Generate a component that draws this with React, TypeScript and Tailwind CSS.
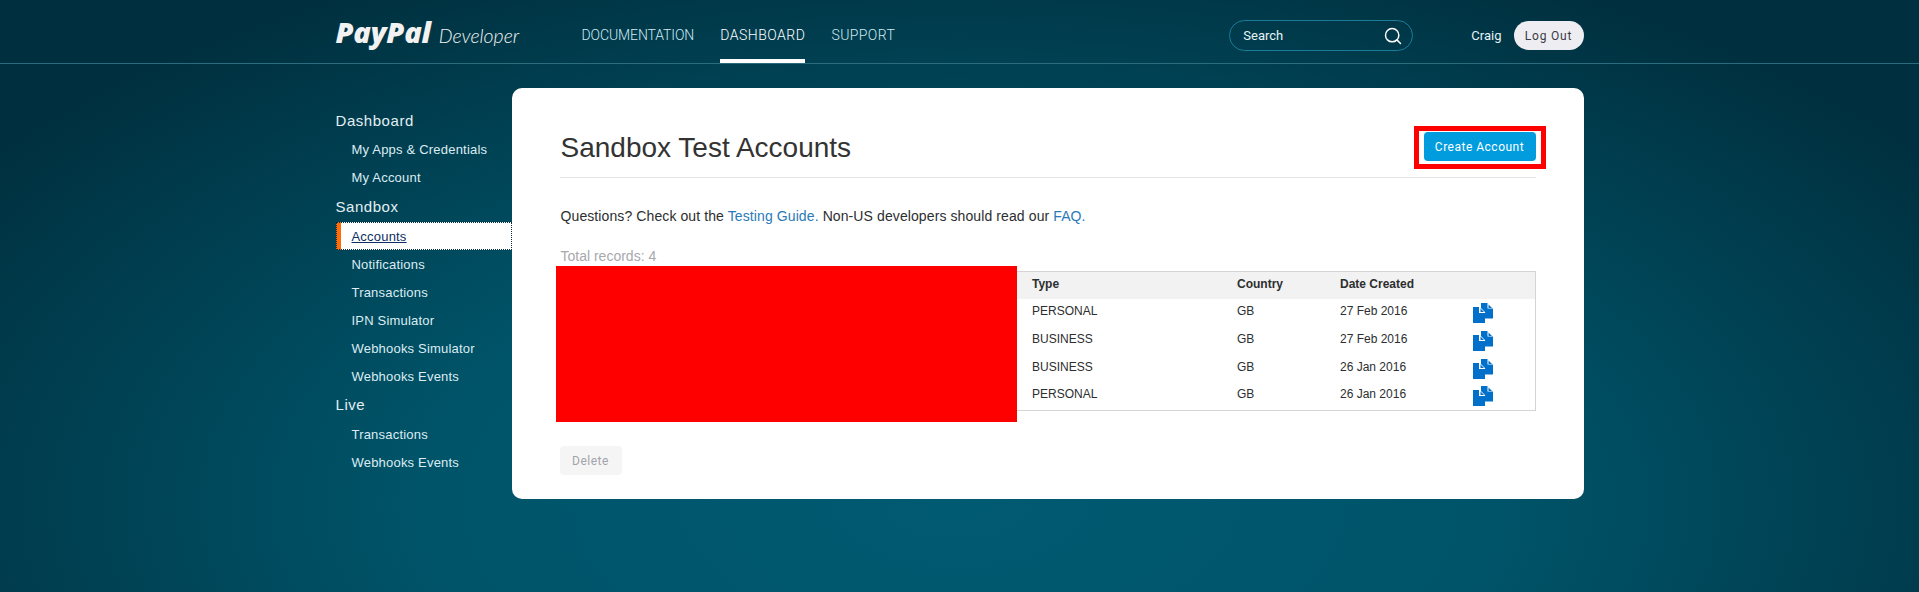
import React from 'react';
import { Search } from 'lucide-react';

const rows = [
  { type: 'PERSONAL', country: 'GB', date: '27 Feb 2016' },
  { type: 'BUSINESS', country: 'GB', date: '27 Feb 2016' },
  { type: 'BUSINESS', country: 'GB', date: '26 Jan 2016' },
  { type: 'PERSONAL', country: 'GB', date: '26 Jan 2016' },
];

const sideNav = [
  { title: 'Dashboard', items: ['My Apps & Credentials', 'My Account'] },
  { title: 'Sandbox', items: ['Accounts', 'Notifications', 'Transactions', 'IPN Simulator', 'Webhooks Simulator', 'Webhooks Events'] },
  { title: 'Live', items: ['Transactions', 'Webhooks Events'] },
];

const CopyIcon = () => (
  <svg width="20" height="20" viewBox="0 0 20 20" className="block">
    {/* back page */}
    <path d="M8 0h6.500v5.500H20V15.500H8z" fill="#0070ca" />
    <path d="M15.500 1.500 19 5H15.500z" fill="#0070ca" />
    {/* front page */}
    <path d="M6.500 3.500 12.500 9.500H12V10H6V3.500z" fill="#ffffff" />
    <path d="M7.500 5.500 11 9H7.500z" fill="#0070ca" />
    <path d="M0 4h6v6h6v10H0z" fill="#0070ca" />
  </svg>
);

export default function App() {
  return (
    <div className="relative h-[592px] w-full overflow-hidden bg-[radial-gradient(ellipse_62%_100%_at_50%_85%,#005a72_0%,#005469_45%,#00303f_100%)] font-['Liberation_Sans',sans-serif]">
      {/* Top bar */}
      <header className="h-16 border-b border-[#2b6c7e]">
        <div className="mx-auto flex h-[63px] w-[1248px] items-center pt-[8px]">
          <div className="flex w-[246px] items-baseline pb-[8px] text-[#f2f2f2]">
            <span className="font-['Open_Sans',sans-serif] text-[29px] font-extrabold italic leading-none tracking-[-0.2px]">PayPal</span>
            <span className="ml-2 font-['Lato',sans-serif] text-[19.5px] font-light italic leading-none">Developer</span>
          </div>
          <nav className="-mt-2 flex h-[63px] gap-[26px] font-['Roboto',sans-serif] text-[14px] font-light">
            <a className="flex h-full items-center pt-[7px] tracking-[-0.1px] text-[#cfeaf3]">DOCUMENTATION</a>
            <a className="flex h-full items-center border-b-4 border-white pt-[11px] tracking-[0.5px] text-white">DASHBOARD</a>
            <a className="flex h-full items-center pt-[7px] tracking-[0.4px] text-[#cfeaf3]">SUPPORT</a>
          </nav>
          <div className="ml-auto flex items-center">
            <div className="flex h-[31px] w-[184px] items-center justify-between rounded-full border border-[#1b7b99] pl-[13px] pr-[9px] font-['Roboto',sans-serif] text-[13px] text-[#e6f3f7]">
              <span>Search</span>
              <Search size={20} strokeWidth={1.75} className="text-white" />
            </div>
            <span className="ml-[58px] font-['Roboto',sans-serif] text-[13px] text-[#e6f3f7]">Craig</span>
            <button className="ml-[12px] h-[29px] w-[70px] rounded-full bg-[#eeeef2] font-['Roboto',sans-serif] text-[12px] tracking-[0.8px] text-[#3a3a45]">Log Out</button>
          </div>
        </div>
      </header>

      <div className="mx-auto mt-6 flex w-[1248px] items-start">
        {/* Side nav */}
        <aside className="w-[176px] pt-[18px] text-[#dcecf2]">
          {sideNav.map((group, g) => (
            <div key={group.title}>
              <div className="h-[30px] text-[15px] leading-[29px] tracking-[0.55px] text-[#e2eff3]">{group.title}</div>
              {group.items.map((item) =>
                item === 'Accounts' ? (
                  <div key={item} className="flex h-[28px] items-center border-l-[5px] border-[#ff6c0c] pt-[2px] outline-1 -outline-offset-1 outline-dotted outline-[#00303f] bg-white pl-[11px] text-[13px] tracking-[0.2px] text-[#0c2d62] underline">
                    {item}
                  </div>
                ) : (
                  <div key={group.title + item} className={g === 0 ? 'h-[28px] pl-4 text-[13px] leading-[28px] tracking-[0.2px]' : 'h-[28px] pl-4 text-[13px] leading-[30px] tracking-[0.2px]'}>{item}</div>
                ),
              )}
            </div>
          ))}
        </aside>

        {/* Card */}
        <main className="relative h-[411px] flex-1 rounded-[10px] bg-white px-12 text-[#2c2e2f]">
          <div className="flex h-[90px] items-center justify-between border-b border-[#e4e4e4] pt-[29px]">
            <h1 className="mt-[2px] pl-[1px] text-[28px] leading-none text-[#333333]">Sandbox Test Accounts</h1>
            <div className="-mr-[10px] flex h-[43px] w-[132px] items-center justify-center border-[5px] border-[#ff0000]">
              <button className="mb-[1px] h-[29px] w-[112px] shrink-0 rounded-[4px] bg-[#009cde] font-['Roboto',sans-serif] text-[12px] tracking-[0.5px] text-white">Create Account</button>
            </div>
          </div>

          <p className="mt-[28px] pl-[1px] text-[14px] leading-5 tracking-[0.1px] text-[#2c2e2f]">
            Questions? Check out the <a className="text-[#2a7ab8]">Testing Guide.</a> Non-US developers should read our <a className="text-[#2a7ab8]">FAQ.</a>
          </p>

          <div className="mt-[20px] pl-[1px] text-[14px] leading-5 text-[#a8a8ad]">Total records: 4</div>

          <table className="mt-[5px] w-[976px] table-fixed border border-[#d4d4d4] text-[12px] text-[#2c2e2f]">
            <colgroup>
              <col className="w-[472px]" />
              <col className="w-[205px]" />
              <col className="w-[103px]" />
              <col className="w-[133px]" />
              <col />
            </colgroup>
            <thead>
              <tr className="h-[27px] bg-[#f2f2f2] text-left">
                <th />
                <th className="pb-[2px] font-bold">Type</th>
                <th className="pb-[2px] font-bold">Country</th>
                <th className="pb-[2px] font-bold">Date Created</th>
                <th />
              </tr>
            </thead>
            <tbody>
              {rows.map((row, i) => (
                <tr key={i} className="h-[28px]">
                  <td />
                  <td className="pb-1">{row.type}</td>
                  <td className="pb-1">{row.country}</td>
                  <td className="pb-1">{row.date}</td>
                  <td><CopyIcon /></td>
                </tr>
              ))}
            </tbody>
          </table>

          <button className="mt-[35px] h-[29px] w-[62px] rounded-[4px] bg-[#f5f5f5] font-['Roboto',sans-serif] text-[12px] tracking-[0.5px] text-[#a3a3aa]">Delete</button>

          {/* redaction over the email column */}
          <div className="absolute left-[44px] top-[178px] h-[156px] w-[461px] bg-[#ff0000]" />
        </main>
      </div>
    </div>
  );
}
